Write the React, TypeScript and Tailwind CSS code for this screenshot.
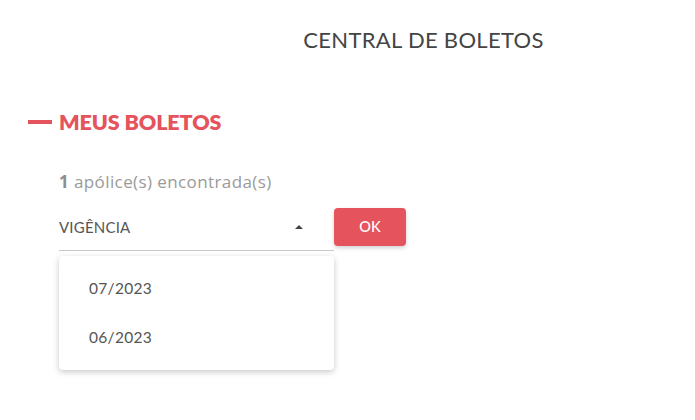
import React from 'react';

const red = 'bg-[#e5535c]';

export default function App() {
  const options = ['07/2023', '06/2023'];

  return (
    <div className="w-[695px] h-[420px] bg-white overflow-hidden font-['Lato',sans-serif]">
      {/* page title */}
      <div className="flex justify-center pl-[152px] pt-[27px]">
        <h1 className="text-[22px] leading-[26px] text-[#444444] font-normal tracking-[0.3px]">
          CENTRAL DE BOLETOS
        </h1>
      </div>

      {/* section heading */}
      <div className="flex items-center gap-[7px] pl-[28px] mt-[56px]">
        <span className={`block w-[24px] h-[4px] ${red}`} />
        <h2 className="text-[21.5px] leading-[26px] font-extrabold text-[#e5535c] tracking-[-0.1px]">
          MEUS BOLETOS
        </h2>
      </div>

      <div className="pl-[59px] pt-[37px]">
        <p className="text-[17px] leading-[20px] text-[#9a9a9a] font-['Open_Sans',sans-serif] tracking-[0.4px]">
          <span className="font-bold text-[#8e8e8e]">1</span> apólice(s) encontrada(s)
        </p>

        <div className="flex items-start mt-[16px]">
          <div className="relative w-[275px]">
            <div className="flex items-start justify-between h-[43px] border-b border-[#c8c8c8] pr-[31px] pt-[10px]">
              <span className="text-[15px] leading-[18px] text-[#555555] tracking-[0.2px]">VIGÊNCIA</span>
              <svg width="8" height="4" viewBox="0 0 8 4" className="mt-[7px]">
                <path d="M0 4 L4 0 L8 4 Z" fill="#444" />
              </svg>
            </div>

            {/* open menu */}
            <ul className="absolute top-full left-0 mt-[5px] w-[275px] bg-white rounded-[4px] py-[8px] shadow-[0_2px_6px_rgba(0,0,0,0.22)]">
              {options.map((o) => (
                <li key={o} className="h-[49px] flex items-center pl-[30px] text-[15.5px] text-[#555555] tracking-[0.3px]">
                  {o}
                </li>
              ))}
            </ul>
          </div>

          <button className={`${red} w-[72px] h-[38px] rounded-[4px] text-white text-[14.5px] font-medium shadow-[0_2px_4px_rgba(0,0,0,0.18)]`}>
            OK
          </button>
        </div>
      </div>
    </div>
  );
}
